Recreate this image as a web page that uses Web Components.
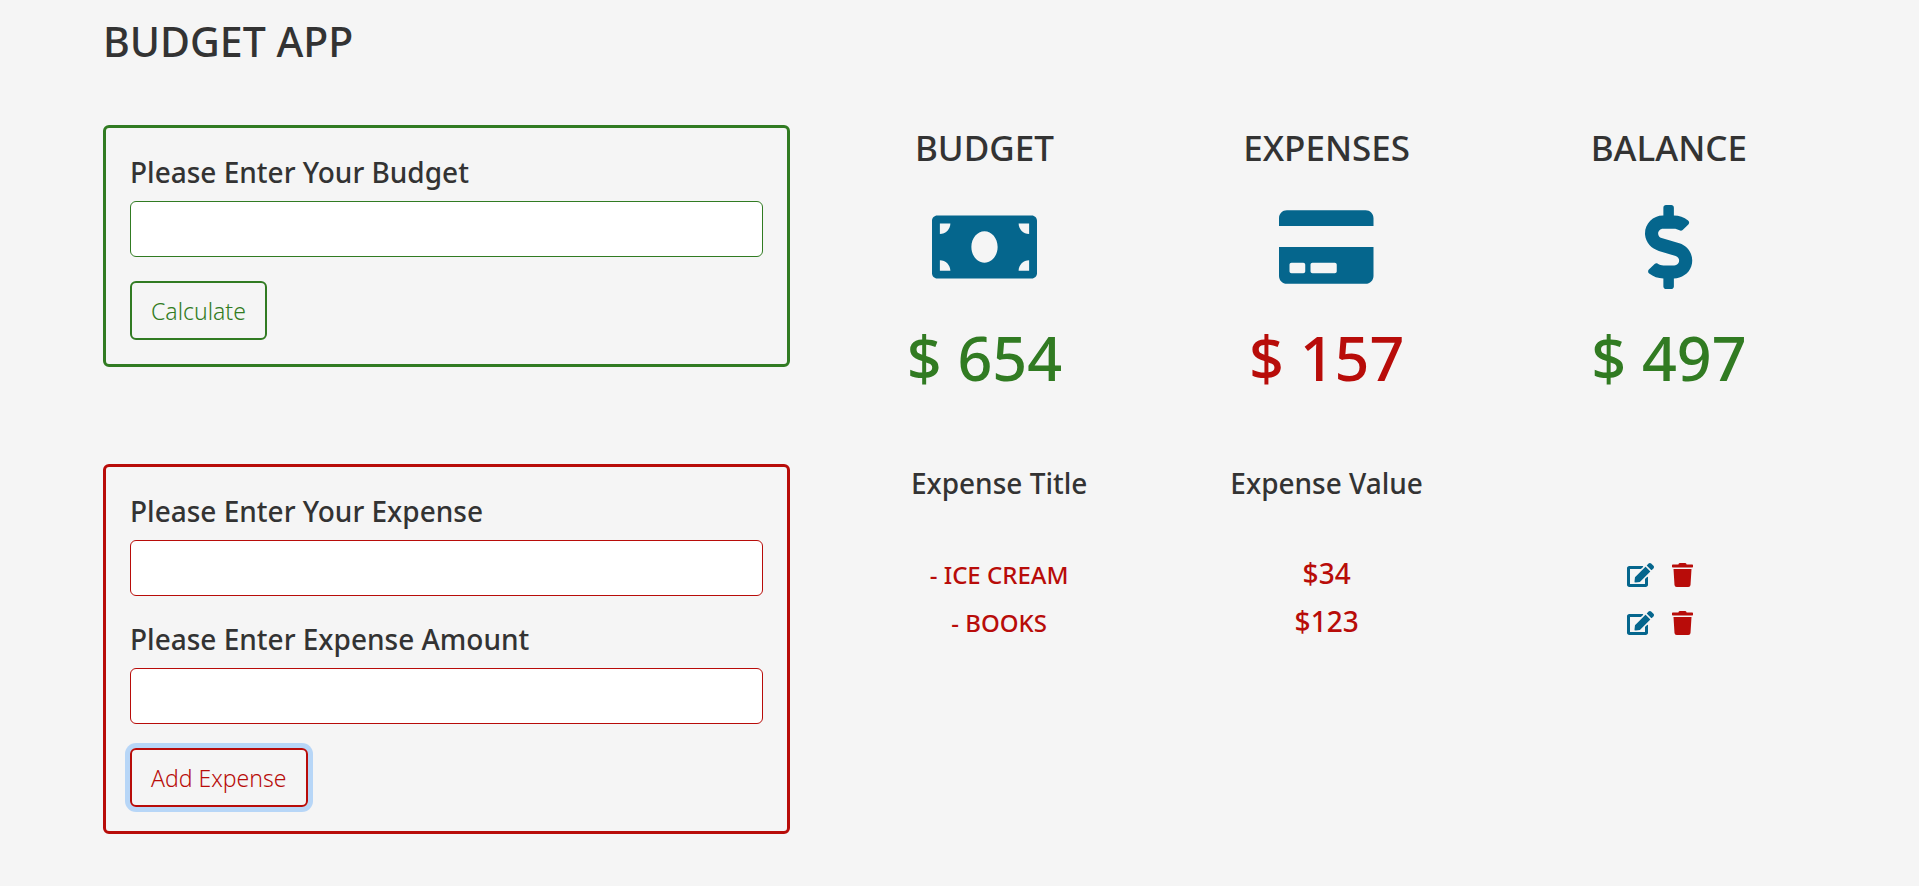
<!DOCTYPE html>
<html lang="en">
<head>
<meta charset="utf-8">
<title>Budget App</title>
<style>
  body {
    margin: 0;
    background: #f5f5f5;
    color: #333;
    font: 300 23px/36px "Noto Sans", "Open Sans", sans-serif;
    --green: #317b22;
    --red: #b80c09;
    --blue: #05668d;
  }
</style>
</head>
<body>
<budget-app>
  <entry-panel slot="budget-form" tone="green" action="Calculate">
    <entry-field label="Please Enter Your Budget" tone="green"></entry-field>
  </entry-panel>
  <stat-card slot="stats" icon="money" tone="green" value="654">Budget</stat-card>
  <stat-card slot="stats" icon="card" tone="red" value="157">Expenses</stat-card>
  <stat-card slot="stats" icon="dollar" tone="green" value="497">Balance</stat-card>
  <entry-panel slot="expense-form" tone="red" action="Add Expense" active>
    <entry-field label="Please Enter Your Expense" tone="red"></entry-field>
    <entry-field label="Please Enter Expense Amount" tone="red"></entry-field>
  </entry-panel>
  <expense-table slot="expenses"></expense-table>
</budget-app>

<script>
const ICONS = {
  money: [640, 'M608 64H32C14.33 64 0 78.33 0 96v320c0 17.67 14.33 32 32 32h576c17.67 0 32-14.33 32-32V96c0-17.67-14.33-32-32-32zM48 400v-64c35.35 0 64 28.65 64 64H48zm0-224v-64h64c0 35.35-28.65 64-64 64zm272 176c-44.19 0-80-42.99-80-96 0-53.02 35.82-96 80-96s80 42.98 80 96c0 53.03-35.83 96-80 96zm272 48h-64c0-35.35 28.65-64 64-64v64zm0-224c-35.35 0-64-28.65-64-64h64v64z'],
  card: [576, 'M0 432c0 26.5 21.5 48 48 48h480c26.5 0 48-21.5 48-48V256H0v176zm192-68c0-6.6 5.4-12 12-12h136c6.6 0 12 5.4 12 12v40c0 6.6-5.4 12-12 12H204c-6.6 0-12-5.4-12-12v-40zm-128 0c0-6.6 5.4-12 12-12h72c6.6 0 12 5.4 12 12v40c0 6.6-5.4 12-12 12H76c-6.6 0-12-5.4-12-12v-40zM576 80v48H0V80c0-26.5 21.5-48 48-48h480c26.5 0 48 21.5 48 48z'],
  dollar: [288, 'M209.2 233.4l-108-31.6C88.7 198.2 80 186.5 80 173.5c0-16.3 13.2-29.5 29.5-29.5h66.3c12.2 0 24.2 3.7 34.2 10.5 6.1 4.1 14.3 3.1 19.5-2l34.8-34c7.1-6.9 6.1-18.4-1.8-24.5C238 74.8 207.4 64.1 176 64V16c0-8.8-7.2-16-16-16h-32c-8.8 0-16 7.2-16 16v48h-2.5C45.8 64-5.4 118.7.5 183.6c4.2 46.1 39.4 83.6 83.8 96.6l102.5 30c12.5 3.7 21.2 15.3 21.2 28.3 0 16.3-13.2 29.5-29.5 29.5h-66.3C100 368 88 364.3 78 357.5c-6.1-4.1-14.3-3.1-19.5 2l-34.8 34c-7.1 6.9-6.1 18.4 1.8 24.5 24.5 19.2 55.1 29.9 86.5 30v48c0 8.8 7.2 16 16 16h32c8.8 0 16-7.2 16-16v-48.2c46.6-.9 90.3-28.6 105.7-72.7 21.5-61.6-14.6-124.8-72.5-141.7z'],
  edit: [576, 'M402.6 83.2l90.2 90.2c3.8 3.8 3.8 10 0 13.8L274.4 405.6l-92.8 10.3c-12.4 1.4-22.9-9.1-21.5-21.5l10.3-92.8L388.8 83.2c3.8-3.8 10-3.8 13.8 0zm162-22.9l-48.8-48.8c-15.2-15.2-39.9-15.2-55.2 0l-35.4 35.4c-3.8 3.8-3.8 10 0 13.8l90.2 90.2c3.8 3.8 10 3.8 13.8 0l35.4-35.4c15.2-15.3 15.2-40 0-55.2zM384 346.2V448H64V128h229.8c3.2 0 6.2-1.3 8.5-3.5l40-40c7.6-7.6 2.2-20.5-8.5-20.5H48C21.5 64 0 85.5 0 112v352c0 26.5 21.5 48 48 48h352c26.5 0 48-21.5 48-48V306.2c0-10.7-12.9-16-20.5-8.5l-40 40c-2.2 2.3-3.5 5.3-3.5 8.5z'],
  trash: [448, 'M432 32H312l-9.4-18.7A24 24 0 0 0 281.1 0H166.8a23.72 23.72 0 0 0-21.4 13.3L136 32H16A16 16 0 0 0 0 48v32a16 16 0 0 0 16 16h416a16 16 0 0 0 16-16V48a16 16 0 0 0-16-16zM53.2 467a48 48 0 0 0 47.9 45h245.8a48 48 0 0 0 47.9-45L416 128H32z']
};

/* Base class: attaches an open shadow root and fills it from render(). */
class Base extends HTMLElement {
  connectedCallback() {
    if (!this.shadowRoot) this.attachShadow({ mode: 'open' }).innerHTML = this.render();
  }
  attr(name) { return this.getAttribute(name) || ''; }
}

/* Glyph whose height follows the font size. */
customElements.define('app-icon', class extends Base {
  render() {
    const [width, path] = ICONS[this.attr('name')];
    return `<style>
      :host { display: block; height: 1em; line-height: 1; }
      svg { display: block; height: 1em; margin: 0 auto; fill: currentColor; }
    </style>
    <svg viewBox="0 0 ${width} 512" aria-hidden="true"><path d="${path}"/></svg>`;
  }
});

customElements.define('entry-field', class extends Base {
  render() {
    return `<style>
      :host { display: block; }
      label { display: block; margin-bottom: 9px; font-size: 28px; font-weight: 500; line-height: 40px; }
      input {
        display: block; box-sizing: border-box; width: 100%; height: 56px; padding: 8px 18px;
        border: 1px solid var(--${this.attr('tone')}); border-radius: 6px;
        background: #fff; color: inherit; font: inherit;
      }
    </style>
    <label for="field">${this.attr('label')}</label>
    <input id="field" type="text">`;
  }
});

customElements.define('entry-panel', class extends Base {
  render() {
    return `<style>
      :host { display: block; --tone: var(--${this.attr('tone')}); }
      form {
        display: flex; flex-direction: column; align-items: flex-start; gap: 24px;
        padding: 24px; border: 3px solid var(--tone); border-radius: 6px;
      }
      .fields { display: flex; flex-direction: column; gap: 23px; width: 100%; }
      button {
        height: 59px; padding: 1px 19px 0; border: 2px solid var(--tone); border-radius: 6px;
        background: transparent; color: var(--tone); font: inherit; cursor: pointer;
      }
      :host([active]) button { box-shadow: 0 0 0 5px rgba(0, 123, 255, .25); }
    </style>
    <form>
      <div class="fields"><slot></slot></div>
      <button type="button">${this.attr('action')}</button>
    </form>`;
  }
});

customElements.define('stat-card', class extends Base {
  render() {
    return `<style>
      :host { display: block; text-align: center; }
      h2 { margin: 0 0 35px; font-size: 35px; font-weight: 500; line-height: 45px; text-transform: uppercase; }
      app-icon { font-size: 84px; color: var(--blue); }
      p { margin: 33px 0 0; font-size: 61px; font-weight: 500; line-height: 72px; color: var(--${this.attr('tone')}); }
    </style>
    <h2><slot></slot></h2>
    <app-icon name="${this.attr('icon')}"></app-icon>
    <p>$ ${this.attr('value')}</p>`;
  }
});

customElements.define('expense-table', class extends Base {
  render() {
    const expenses = [['ice cream', 34], ['books', 123]];
    const rows = expenses.map(([title, amount]) => `<tr>
      <td class="title">- ${title}</td>
      <td class="amount">$${amount}</td>
      <td><div class="actions">
        <button class="edit" aria-label="Edit ${title}"><app-icon name="edit"></app-icon></button>
        <button class="delete" aria-label="Delete ${title}"><app-icon name="trash"></app-icon></button>
      </div></td></tr>`).join('');
    return `<style>
      :host { display: block; padding: 0 22px; }
      table { width: 100%; table-layout: fixed; border-collapse: collapse; text-align: center; }
      th { padding: 0 0 47px; font-size: 28px; font-weight: 500; line-height: 38px; }
      td { padding: 0; vertical-align: baseline; color: var(--red); font-weight: 500; }
      td:last-child { vertical-align: top; }
      .title { font-size: 24px; line-height: 40px; text-transform: uppercase; }
      .amount { font-size: 28px; line-height: 48px; }
      .actions { display: flex; justify-content: center; gap: 18px; padding: 14px 0 0 12px; }
      button { padding: 0; border: 0; background: none; font-size: 24px; cursor: pointer; }
      .edit { color: var(--blue); }
      .delete { color: var(--red); }
    </style>
    <table>
      <thead><tr><th scope="col">Expense Title</th><th scope="col">Expense Value</th><td></td></tr></thead>
      <tbody>${rows}</tbody>
    </table>`;
  }
});

customElements.define('budget-app', class extends Base {
  render() {
    return `<style>
      :host { display: block; padding: 16px 79px 48px 80px; }
      h1 { margin: 0 23px 59px; font-size: 41px; font-weight: 500; line-height: 50px; text-transform: uppercase; }
      main { display: grid; grid-template-columns: minmax(0, 5fr) minmax(0, 7fr); row-gap: 70px; align-items: start; }
      .form { padding: 0 23px; }
      .stats { display: grid; grid-template-columns: repeat(3, 1fr); }
    </style>
    <h1>Budget App</h1>
    <main>
      <div class="form"><slot name="budget-form"></slot></div>
      <div class="stats"><slot name="stats"></slot></div>
      <div class="form"><slot name="expense-form"></slot></div>
      <slot name="expenses"></slot>
    </main>`;
  }
});
</script>
</body>
</html>
